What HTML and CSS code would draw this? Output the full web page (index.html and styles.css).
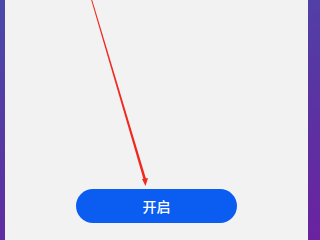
FILE: index.html
```html
<!DOCTYPE html>
<html lang="zh-CN">
<head>
    <meta charset="UTF-8">
    <meta name="viewport" content="width=device-width, initial-scale=1.0">
    <title>开启</title>
    <link rel="stylesheet" href="styles.css">
</head>
<body>
    <div class="panel">
        <!-- 指示箭头 -->
        <svg class="pointer" width="303" height="240" viewBox="0 0 303 240">
            <path d="M85.6 -2 L86.6 -2 L141.4 180 L139 181 Z" fill="#f0281f"/>
            <path d="M140.5 186 L137 179 L143 178 Z" fill="#f0281f"/>
        </svg>
        <button class="open-btn">开启</button>
    </div>
</body>
</html>
```

FILE: styles.css
```css
body {
    margin: 0;
    width: 320px;
    height: 240px;
    overflow: hidden;
    background: linear-gradient(165deg, #4a4aa8 0%, #5a34a2 55%, #6a22a0 100%);
    font-family: "Noto Sans CJK SC", "Noto Sans", sans-serif;
}
.panel {
    position: relative;
    margin-left: 5px;
    width: 303px;
    height: 240px;
    background: #f2f2f3;
    display: flex;
    flex-direction: column;
    justify-content: flex-end;
    padding-bottom: 17px;
    box-sizing: border-box;
}
.pointer {
    position: absolute;
    left: 0;
    top: 0;
}
.open-btn {
    margin-left: 71px;
    width: 161px;
    height: 34px;
    border: none;
    border-radius: 17px;
    background: #0b5cf0;
    color: #ffffff;
    font-family: inherit;
    font-size: 14px;
    font-weight: 500;
    padding: 0;
}
```
